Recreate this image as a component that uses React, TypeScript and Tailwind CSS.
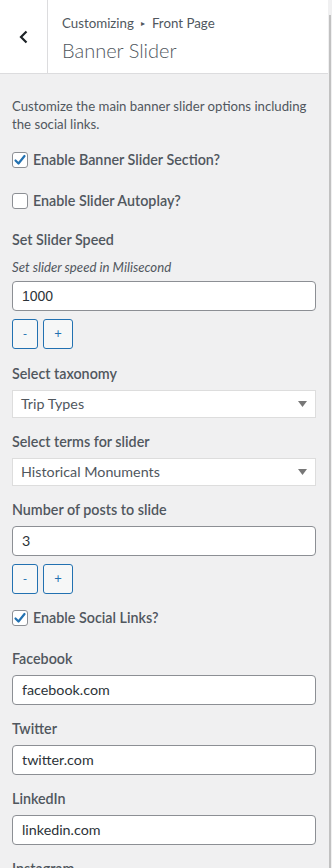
import React from "react"

const font = { fontFamily: 'Lato, "Open Sans", sans-serif' }

const Label = ({ children }: { children: React.ReactNode }) => (
  <div className="text-[14.3px] font-semibold text-[#50575e] leading-[20px]">{children}</div>
)

const TextInput = ({ value, arial }: { value: string; arial?: boolean }) => (
  <div
    className={`mt-[6px] h-[30px] w-full rounded-[4px] border border-[#8c8f94] bg-white px-[9px] flex items-center text-[14.3px] text-[#2c3338] ${arial ? "font-['Liberation_Sans',sans-serif] text-[14px]" : ""}`}
  >
    {value}
  </div>
)

const Stepper = () => (
  <div className="mt-[8px] flex gap-[5px]">
    <button className="h-[30px] w-[26px] rounded-[3px] border border-[#2271b1] bg-[#f6f7f7] text-[12px] text-[#2271b1]">-</button>
    <button className="h-[30px] w-[30px] rounded-[3px] border border-[#2271b1] bg-[#f6f7f7] text-[13px] text-[#2271b1]">+</button>
  </div>
)

const Select = ({ value }: { value: string }) => (
  <div className="mt-[6px] h-[28px] w-full border border-[#dddddd] bg-white pl-[8px] pr-[8px] flex items-center justify-between text-[14.3px] text-[#50575e]">
    <span>{value}</span>
    <svg width="9" height="6" viewBox="0 0 9 6"><path d="M0 0h9L4.5 6z" fill="#777" /></svg>
  </div>
)

const Check = ({ checked, label }: { checked?: boolean; label: string }) => (
  <div className="flex h-[20px] items-center gap-[5px]">
    <span className="flex h-[16px] w-[16px] items-center justify-center rounded-[3px] border border-[#8c8f94] bg-white">
      {checked && (
        <svg width="14" height="14" viewBox="0 0 14 14">
          <path d="M2.5 7.5l3 3 6-7.5" stroke="#2271b1" strokeWidth="2.2" fill="none" strokeLinecap="round" strokeLinejoin="round" />
        </svg>
      )}
    </span>
    <span className="text-[14.3px] font-semibold text-[#50575e] leading-[20px]">{label}</span>
  </div>
)

export default function App() {
  return (
    <div className="flex h-[868px] w-[332px] overflow-hidden bg-[#f0f0f1]" style={font}>
      <div className="w-[328px] flex-none">
        <div className="flex h-[74px] border-b border-[#dcdcde] bg-white">
          <div className="flex w-[48px] flex-none items-center justify-center border-r border-[#dcdcde]">
            <svg width="12" height="16" viewBox="0 0 12 16">
              <path d="M8.5 2.5L3 8l5.5 5.5" stroke="#1d2327" strokeWidth="2.2" fill="none" />
            </svg>
          </div>
          <div className="pl-[14px] pt-[13px]">
            <div className="flex items-center text-[13.3px] text-[#50575e] leading-[20px]">
              Customizing
              <span className="mx-[7px] text-[8px]">▸</span>
              Front Page
            </div>
            <div className="mt-[3px] text-[20px] font-light text-[#50575e] leading-[28px]">Banner Slider</div>
          </div>
        </div>

        <div className="px-[12px] pt-[23px]">
          <p className="text-[13.2px] leading-[18px] text-[#50575e]">
            Customize the main banner slider options including the social links.
          </p>

          <div className="mt-[17px]">
            <Check checked label="Enable Banner Slider Section?" />
          </div>
          <div className="mt-[21px]">
            <Check label="Enable Slider Autoplay?" />
          </div>

          <div className="mt-[19px]">
            <Label>Set Slider Speed</Label>
            <div className="mt-[8px] text-[13.2px] italic leading-[18px] text-[#50575e]">Set slider speed in Milisecond</div>
            <div className="mt-[-1px]">
              <TextInput value="1000" arial />
            </div>
            <Stepper />
          </div>

          <div className="mt-[15px]">
            <Label>Select taxonomy</Label>
            <Select value="Trip Types" />
          </div>

          <div className="mt-[14px]">
            <Label>Select terms for slider</Label>
            <Select value="Historical Monuments" />
          </div>

          <div className="mt-[14px]">
            <Label>Number of posts to slide</Label>
            <TextInput value="3" />
            <Stepper />
          </div>

          <div className="mt-[14px]">
            <Check checked label="Enable Social Links?" />
          </div>

          <div className="mt-[21px]">
            <Label>Facebook</Label>
            <TextInput value="facebook.com" />
          </div>
          <div className="mt-[14px]">
            <Label>Twitter</Label>
            <TextInput value="twitter.com" />
          </div>
          <div className="mt-[14px]">
            <Label>LinkedIn</Label>
            <TextInput value="linkedin.com" />
          </div>
          <div className="mt-[14px]">
            <Label>Instagram</Label>
          </div>
        </div>
      </div>
      <div className="relative w-[4px] flex-none bg-[#f0f0f1]">
        <div className="absolute left-[1px] top-[15px] bottom-0 w-[2px] bg-[#c1c1c1]" />
      </div>
    </div>
  )
}
